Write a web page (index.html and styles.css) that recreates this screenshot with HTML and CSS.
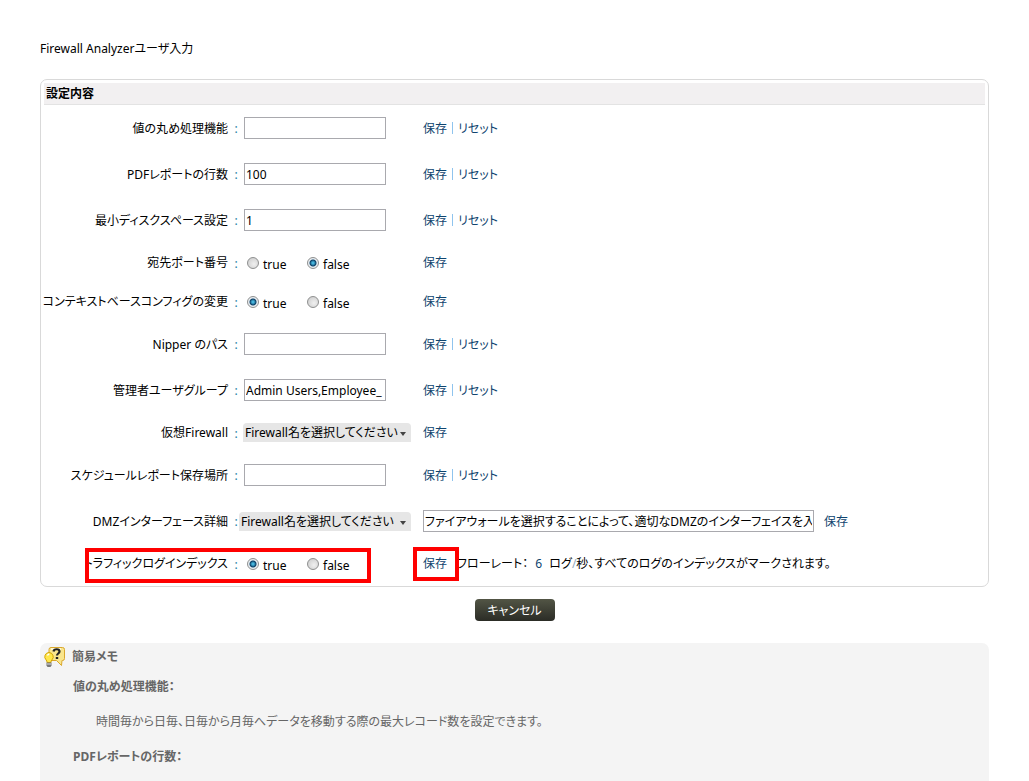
FILE: index.html
```
<!DOCTYPE html>
<html lang="ja">
<head>
<meta charset="utf-8">
<title>Firewall Analyzerユーザ入力</title>
<link rel="stylesheet" href="styles.css">
</head>
<body>
<h1 class="page-title">Firewall Analyzerユーザ入力</h1>
<form class="settings">
  <section class="panel">
    <h2 class="panel-head">設定内容</h2>
    <div class="row">
      <label class="name" for="round">値の丸め処理機能</label><span class="colon">:</span>
      <div class="field"><input class="text" id="round" type="text"></div>
      <div class="actions"><a href="#">保存</a><span class="bar"></span><a href="#">リセット</a></div>
    </div>
    <div class="row">
      <label class="name" for="pdf">PDFレポートの行数</label><span class="colon">:</span>
      <div class="field"><input class="text" id="pdf" type="text" value="100"></div>
      <div class="actions"><a href="#">保存</a><span class="bar"></span><a href="#">リセット</a></div>
    </div>
    <div class="row">
      <label class="name" for="disk">最小ディスクスペース設定</label><span class="colon">:</span>
      <div class="field"><input class="text" id="disk" type="text" value="1"></div>
      <div class="actions"><a href="#">保存</a><span class="bar"></span><a href="#">リセット</a></div>
    </div>
    <div class="row short">
      <span class="name" id="port">宛先ポート番号</span><span class="colon">:</span>
      <div class="field radios" role="radiogroup" aria-labelledby="port">
        <label class="choice"><input type="radio" name="port">true</label>
        <label class="choice"><input type="radio" name="port" checked>false</label>
      </div>
      <div class="actions"><a href="#">保存</a></div>
    </div>
    <div class="row short">
      <span class="name" id="context">コンテキストベースコンフィグの変更</span><span class="colon">:</span>
      <div class="field radios" role="radiogroup" aria-labelledby="context">
        <label class="choice"><input type="radio" name="context" checked>true</label>
        <label class="choice"><input type="radio" name="context">false</label>
      </div>
      <div class="actions"><a href="#">保存</a></div>
    </div>
    <div class="row">
      <label class="name" for="nipper">Nipper のパス</label><span class="colon">:</span>
      <div class="field"><input class="text" id="nipper" type="text"></div>
      <div class="actions"><a href="#">保存</a><span class="bar"></span><a href="#">リセット</a></div>
    </div>
    <div class="row">
      <label class="name" for="group">管理者ユーザグループ</label><span class="colon">:</span>
      <div class="field"><input class="text" id="group" type="text" value="Admin Users,Employee_"></div>
      <div class="actions"><a href="#">保存</a><span class="bar"></span><a href="#">リセット</a></div>
    </div>
    <div class="row short">
      <label class="name" for="virtual">仮想Firewall</label><span class="colon">:</span>
      <div class="field end"><span class="picker"><select id="virtual"><option>Firewall名を選択してください</option></select></span></div>
      <div class="actions"><a href="#">保存</a></div>
    </div>
    <div class="row">
      <label class="name" for="schedule">スケジュールレポート保存場所</label><span class="colon">:</span>
      <div class="field"><input class="text" id="schedule" type="text"></div>
      <div class="actions"><a href="#">保存</a><span class="bar"></span><a href="#">リセット</a></div>
    </div>
    <div class="row">
      <label class="name" for="dmz">DMZインターフェース詳細</label><span class="colon">:</span>
      <div class="field end"><span class="picker wide"><select id="dmz"><option>Firewall名を選択してください</option></select></span></div>
      <div class="actions spaced"><input class="text long" type="text" aria-label="DMZのインターフェイス" value="ファイアウォールを選択することによって、適切なDMZのインターフェイスを入"><a href="#">保存</a></div>
    </div>
    <div class="row short marked">
      <span class="name" id="traffic">トラフィックログインデックス</span><span class="colon">:</span>
      <div class="field radios" role="radiogroup" aria-labelledby="traffic">
        <label class="choice"><input type="radio" name="traffic" checked>true</label>
        <label class="choice"><input type="radio" name="traffic">false</label>
      </div>
      <div class="actions spaced"><a href="#">保存</a><span class="rate">フローレート： <b>6</b> ログ<i>/</i>秒、すべてのログのインデックスがマークされます。</span></div>
      <span class="mark mark-field"></span>
      <span class="mark mark-save"></span>
    </div>
  </section>
  <button class="cancel" type="button">キャンセル</button>
</form>
<section class="notes">
  <h2 class="notes-title">
    <svg class="tip" viewBox="0 0 22 22" width="22" height="22" aria-hidden="true">
      <path d="M7 1.500h11.500a2 2 0 0 1 2 2v9a2 2 0 0 1-2 2h-.5l-.5 5-5-5H7a2 2 0 0 1-2-2v-9a2 2 0 0 1 2-2z" fill="#f9e58c" stroke="#d9a72c"/>
      <path d="M7 3h10" stroke="#fff7cf" stroke-width="2"/>
      <path d="M9.500 5.500C10 2.500 15.500 2.500 15.500 5.500c0 2-2.500 2-2.500 4" fill="none" stroke="#222" stroke-width="2.200"/>
      <path d="M11.800 11h2.400v2h-2.400z" fill="#222"/>
      <path d="M5 6.500a4.300 4.300 0 0 0-3 7.300c.8.800 1 1.700 1 2.700h4c0-1 .2-1.900 1-2.700a4.300 4.300 0 0 0-3-7.300z" fill="#ffe74a" stroke="#d5a400"/>
      <path d="M3.500 9.500q.5-1.300 1.800-1.500" stroke="#fff" stroke-width="1.500" fill="none"/>
      <path d="M2.500 16.500h5v3l-1 1.500h-3l-1-1.500z" fill="#777"/>
      <path d="M3 18h4" stroke="#ddd"/>
    </svg>
    簡易メモ
  </h2>
  <dl class="note-list">
    <dt>値の丸め処理機能：</dt>
    <dd>時間毎から日毎、日毎から月毎へデータを移動する際の最大レコード数を設定できます。</dd>
    <dt>PDFレポートの行数：</dt>
  </dl>
</section>
</body>
</html>
```
FILE: styles.css
```
* { box-sizing: border-box; }

body {
  margin: 0;
  padding: 39px 40px 0;
  min-height: 100vh;
  display: flex;
  flex-direction: column;
  background: #fff;
  color: #000;
  font: 12px/20px "Noto Sans", "Noto Sans CJK JP", sans-serif;
  font-feature-settings: "palt";
}

input, select, button { font: inherit; font-feature-settings: inherit; color: inherit; }
a { color: #0f446e; text-decoration: none; }

.page-title { margin: 0 0 20px; font-size: 12px; font-weight: normal; }

.settings { display: flex; flex-direction: column; align-items: center; }
.panel { width: 100%; padding: 3px; border: 1px solid #d9d9d9; border-radius: 7px; }
.panel-head {
  margin: 0;
  padding: 0 2px;
  font-size: 12px;
  line-height: 21px;
  background: #f2f0f1;
  border-bottom: 1px solid #e3e3e3;
}

.row {
  display: grid;
  grid-template-columns: 184px 16px 167px 1fr;
  align-items: center;
  height: 46px;
  white-space: nowrap;
}
.short { height: 39px; }
.name { display: flex; justify-content: flex-end; padding-top: 2px; }
.short .name { padding-top: 0; }
.colon { color: #1f7fa3; text-align: center; padding-top: 2px; }
.field { display: flex; align-items: center; }
.end { justify-content: flex-end; }
.actions { display: flex; align-items: center; padding-left: 12px; }
.row:not(.short) .actions a { padding-top: 2px; }
.spaced { gap: 10px; }
.bar { width: 1px; height: 12px; margin: 0 5px; background: #8fc4ee; }

.text {
  width: 142px;
  height: 22px;
  padding: 0 1px;
  border: 1px solid #a9a9ae;
  border-radius: 0;
  background: #fff;
}
.long { width: 391px; }

.choice { display: flex; align-items: center; gap: 4px; width: 60px; padding: 4px 0 0 3px; }
.choice input {
  appearance: none;
  width: 12px;
  height: 12px;
  margin: 0 0 4px;
  border: 1px solid #8e8f8f;
  border-radius: 50%;
  background: radial-gradient(circle at 60% 60%, #f0f0f0, #c8c8c8);
}
.choice input:checked {
  background: radial-gradient(circle, #45b4dc 0 1px, #0b3f66 3px, #e9eef2 4px);
}

.picker {
  position: relative;
  flex: none;
  width: 168px;
  height: 19px;
  border-radius: 4px 4px 0 0;
  background: #e6e6e6;
}
.wide { width: 172px; }
.picker select {
  appearance: none;
  display: block;
  width: 100%;
  height: 100%;
  padding: 0 8px 0 2px;
  border: 0;
  background: transparent;
  line-height: 19px;
}
.picker::after {
  content: "";
  position: absolute;
  right: 5px;
  top: 9px;
  border: 3px solid transparent;
  border-top: 4px solid #444;
  border-bottom: 0;
  pointer-events: none;
}

.rate b { margin: 0 4px; color: #0f446e; font-weight: normal; }
.rate i { color: #8fa9c0; font-style: normal; }

.marked { position: relative; }
.mark { position: absolute; border: 4px solid #f00; pointer-events: none; }
.mark-field { left: 41px; top: 4px; width: 286px; height: 35px; }
.mark-save { left: 369px; top: 3px; width: 46px; height: 34px; }

.cancel {
  width: 80px;
  height: 22px;
  margin: 12px 0 22px;
  padding: 1px 0 0;
  border: 0;
  border-radius: 4px;
  background: linear-gradient(#525545, #2b2c26);
  color: #fff;
  line-height: 22px;
}

.notes {
  flex: 1;
  padding: 3px 4px 14px;
  border-radius: 7px 7px 0 0;
  background: #f4f4f4;
  color: #666;
}
.notes-title { display: flex; align-items: center; gap: 6px; margin: 0; font-size: 12px; font-weight: bold; line-height: 20px; }
.note-list { margin: 9px 0 0 29px; }
.note-list dt { font-weight: bold; }
.note-list dd { margin: 15px 0 15px 23px; }
```
